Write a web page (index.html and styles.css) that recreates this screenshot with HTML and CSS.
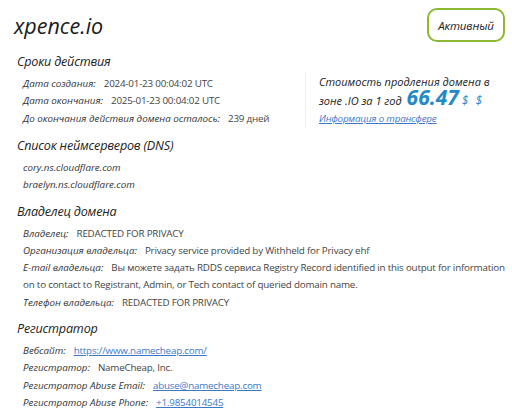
FILE: index.html
```html
<!DOCTYPE html>
<html lang="ru">
<head>
<meta charset="utf-8">
<link rel="stylesheet" href="styles.css">
</head>
<body>
<div class="page">
  <header class="top">
    <h1 class="domain">xpence.io</h1>
    <div class="badge">Активный</div>
  </header>

  <section class="sec">
    <h2 class="sec-title">Сроки действия</h2>
    <div class="dates">
      <div class="rows">
        <div class="row"><span class="lbl">Дата создания:</span><span class="val">2024-01-23 00:04:02 UTC</span></div>
        <div class="row"><span class="lbl">Дата окончания:</span><span class="val">2025-01-23 00:04:02 UTC</span></div>
        <div class="row"><span class="lbl">До окончания действия домена осталось:</span><span class="val">239 дней</span></div>
      </div>
      <div class="price">
        <div class="price-text">Стоимость продления домена в зоне .IO за 1 год <span class="amount">66.47</span> <span class="cur">$ $</span></div>
        <a class="link ital" href="#">Информация о трансфере</a>
      </div>
    </div>
  </section>

  <section class="sec">
    <h2 class="sec-title">Список неймсерверов (DNS)</h2>
    <div class="rows">
      <div class="row lbl">cory.ns.cloudflare.com</div>
      <div class="row lbl">braelyn.ns.cloudflare.com</div>
    </div>
  </section>

  <section class="sec">
    <h2 class="sec-title">Владелец домена</h2>
    <div class="rows">
      <div class="row"><span class="lbl">Владелец:</span><span class="val">REDACTED FOR PRIVACY</span></div>
      <div class="row"><span class="lbl">Организация владельца:</span><span class="val">Privacy service provided by Withheld for Privacy ehf</span></div>
      <div class="row wrap"><span class="lbl">E-mail владельца:</span><span class="val">Вы можете задать RDDS сервиса Registry Record identified in this output for information on to contact to Registrant, Admin, or Tech contact of queried domain name.</span></div>
      <div class="row"><span class="lbl">Телефон владельца:</span><span class="val">REDACTED FOR PRIVACY</span></div>
    </div>
  </section>

  <section class="sec">
    <h2 class="sec-title">Регистратор</h2>
    <div class="rows">
      <div class="row"><span class="lbl">Вебсайт:</span><a class="val link" href="#">https://www.namecheap.com/</a></div>
      <div class="row"><span class="lbl">Регистратор:</span><span class="val">NameCheap, Inc.</span></div>
      <div class="row"><span class="lbl">Регистратор Abuse Email:</span><a class="val link" href="#">abuse@namecheap.com</a></div>
      <div class="row"><span class="lbl">Регистратор Abuse Phone:</span><a class="val link" href="#">+1.9854014545</a></div>
    </div>
  </section>
</div>
</body>
</html>
```

FILE: styles.css
```css
* { box-sizing: border-box; }
html, body { margin: 0; padding: 0; background: #fff; }
body {
  font-family: "Open Sans", "Noto Sans", sans-serif;
  color: #333;
  width: 512px;
  height: 420px;
  overflow: hidden;
}
.page { padding: 8px 4px 0 14px; }
.top {
  display: flex;
  justify-content: space-between;
  align-items: center;
  height: 34px;
  padding-right: 3px;
}
.domain {
  margin: 0;
  font-size: 21.5px;
  font-weight: 400;
  font-style: italic;
  color: #1a1a1a;
}
.badge {
  height: 34px;
  width: 78px;
  border: 2.5px solid #8db832;
  border-radius: 10px;
  display: flex;
  align-items: center;
  justify-content: center;
  font-size: 11.5px;
  letter-spacing: -0.1px;
  font-style: italic;
  color: #222;
}
.sec { padding-left: 3px; }
.sec-title {
  margin: 0;
  font-size: 12.6px;
  letter-spacing: -0.2px;
  font-weight: 400;
  font-style: italic;
  color: #222;
  height: 20px;
  line-height: 20px;
}
.sec:first-of-type .sec-title { margin-top: 10px; }
.sec + .sec .sec-title { margin-top: 8px; }
.rows { padding: 3px 0 0 6px; }
.row {
  font-size: 9.8px;
  line-height: 17.3px;
  white-space: nowrap;
}
.row.wrap { white-space: normal; }
.lbl { font-style: italic; color: #333; }
.val { margin-left: 8px; color: #444; letter-spacing: -0.2px; }
.dates { display: flex; align-items: flex-start; }
.dates .rows { flex: 0 0 288px; }
.price {
  border-left: 1px solid #eee;
  padding: 0 0 0 13px;
  height: 56px;
  width: 200px;
  font-style: italic;
  color: #222;
}
.price-text { font-size: 11px; line-height: 19px; }
.amount {
  font-size: 21px;
  font-weight: 700;
  color: #2489c9;
  line-height: 10px;
  margin-left: 2px;
}
.cur { font-size: 12px; color: #2489c9; letter-spacing: 2px; line-height: 10px; }
.link { color: #3c78c8; text-decoration: underline; }
.ital { display: block; font-size: 9.8px; letter-spacing: -0.2px; font-style: italic; line-height: 17px; }
```
